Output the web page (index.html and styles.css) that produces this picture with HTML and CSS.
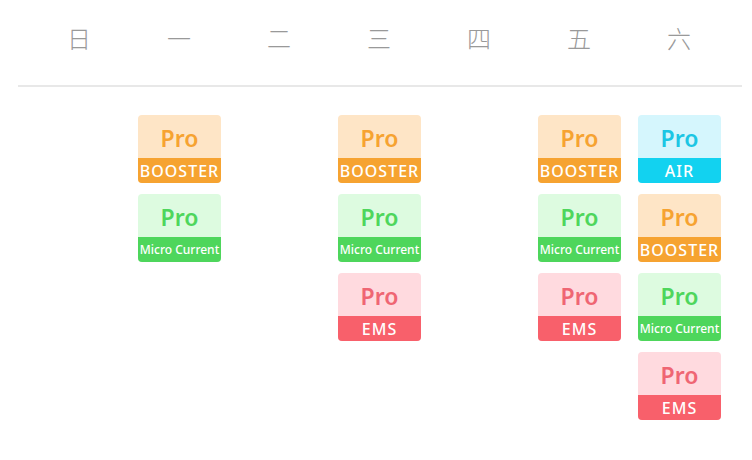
FILE: index.html
```html
<!DOCTYPE html>
<html lang="zh-CN">
<head>
	<meta charset="UTF-8">
	<meta name="viewport" content="width=device-width, initial-scale=1.0">
	<title>课程周表</title>

	<link rel="stylesheet" href="styles.css">
</head>
<body>
	<div class="week">
		<div class="week-head">
			<span>日</span>
			<span>一</span>
			<span>二</span>
			<span>三</span>
			<span>四</span>
			<span>五</span>
			<span>六</span>
		</div>
		<div class="divider"></div>

		<div class="week-body">
			<!-- 日 -->
			<div class="day"></div>

			<!-- 一 -->
			<div class="day">
				<div class="card booster"><div class="pro">Pro</div><div class="tag">BOOSTER</div></div>
				<div class="card micro"><div class="pro">Pro</div><div class="tag small">Micro Current</div></div>
			</div>

			<!-- 二 -->
			<div class="day"></div>

			<!-- 三 -->
			<div class="day">
				<div class="card booster"><div class="pro">Pro</div><div class="tag">BOOSTER</div></div>
				<div class="card micro"><div class="pro">Pro</div><div class="tag small">Micro Current</div></div>
				<div class="card ems"><div class="pro">Pro</div><div class="tag">EMS</div></div>
			</div>

			<!-- 四 -->
			<div class="day"></div>

			<!-- 五 -->
			<div class="day">
				<div class="card booster"><div class="pro">Pro</div><div class="tag">BOOSTER</div></div>
				<div class="card micro"><div class="pro">Pro</div><div class="tag small">Micro Current</div></div>
				<div class="card ems"><div class="pro">Pro</div><div class="tag">EMS</div></div>
			</div>

			<!-- 六 -->
			<div class="day">
				<div class="card air"><div class="pro">Pro</div><div class="tag">AIR</div></div>
				<div class="card booster"><div class="pro">Pro</div><div class="tag">BOOSTER</div></div>
				<div class="card micro"><div class="pro">Pro</div><div class="tag small">Micro Current</div></div>
				<div class="card ems"><div class="pro">Pro</div><div class="tag">EMS</div></div>
			</div>
		</div>
	</div>
</body>
</html>
```

FILE: styles.css
```css
*,
*::before,
*::after {
	margin: 0;
	padding: 0;
	box-sizing: border-box;
}

:root {
	--text-muted: #999;
	--line: #e8e8e8;

	--orange: #f6a331;
	--orange-bg: #fee5c6;
	--green: #4ed65c;
	--green-bg: #ddfbe0;
	--red: #f8606b;
	--red-text: #ef6673;
	--red-bg: #ffdadf;
	--cyan: #12d2f0;
	--cyan-text: #1cc6e4;
	--cyan-bg: #d5f6fd;
}

body {
	background: #fff;
	font-family: "Noto Sans", "Noto Sans CJK SC", sans-serif;
	width: 752px;
	height: 460px;
	overflow: hidden;
}

/**
* Week header
*/
.week-head {
	display: grid;
	grid-template-columns: repeat(7, 100px);
	margin-left: 29px;
	height: 85px;
	padding-bottom: 11px;
	align-items: center;
}

.week-head span {
	text-align: center;
	font-family: "Noto Sans CJK SC", sans-serif;
	font-weight: 300;
	font-size: 24px;
	color: var(--text-muted);
}

.divider {
	height: 2px;
	margin: 0 10px 0 18px;
	background: var(--line);
}

/**
* Week body
*/
.week-body {
	display: grid;
	grid-template-columns: repeat(7, 100px);
	margin-left: 29px;
	padding-top: 28px;
}

.day {
	display: flex;
	flex-direction: column;
	align-items: center;
	gap: 11px;
}

.card {
	width: 83px;
	height: 68px;
	margin-left: 1px;
	border-radius: 4px;
	overflow: hidden;
	display: flex;
	flex-direction: column;
}

.card .pro {
	height: 43px;
	display: flex;
	align-items: center;
	justify-content: center;
	padding-top: 2px;
	font-size: 23px;
	font-weight: 600;
}

.card .tag {
	height: 25px;
	display: flex;
	align-items: center;
	justify-content: center;
	color: #fff;
	font-size: 16px;
	font-weight: 500;
	letter-spacing: 1px;
	white-space: nowrap;
}

.card .tag.small {
	font-size: 12px;
	letter-spacing: 0;
}

/* colour variants */
.booster { background: var(--orange-bg); }
.booster .pro { color: var(--orange); }
.booster .tag { background: var(--orange); }

.micro { background: var(--green-bg); }
.micro .pro { color: var(--green); }
.micro .tag { background: var(--green); }

.ems { background: var(--red-bg); }
.ems .pro { color: var(--red-text); }
.ems .tag { background: var(--red); }

.air { background: var(--cyan-bg); }
.air .pro { color: var(--cyan-text); }
.air .tag { background: var(--cyan); }
```
